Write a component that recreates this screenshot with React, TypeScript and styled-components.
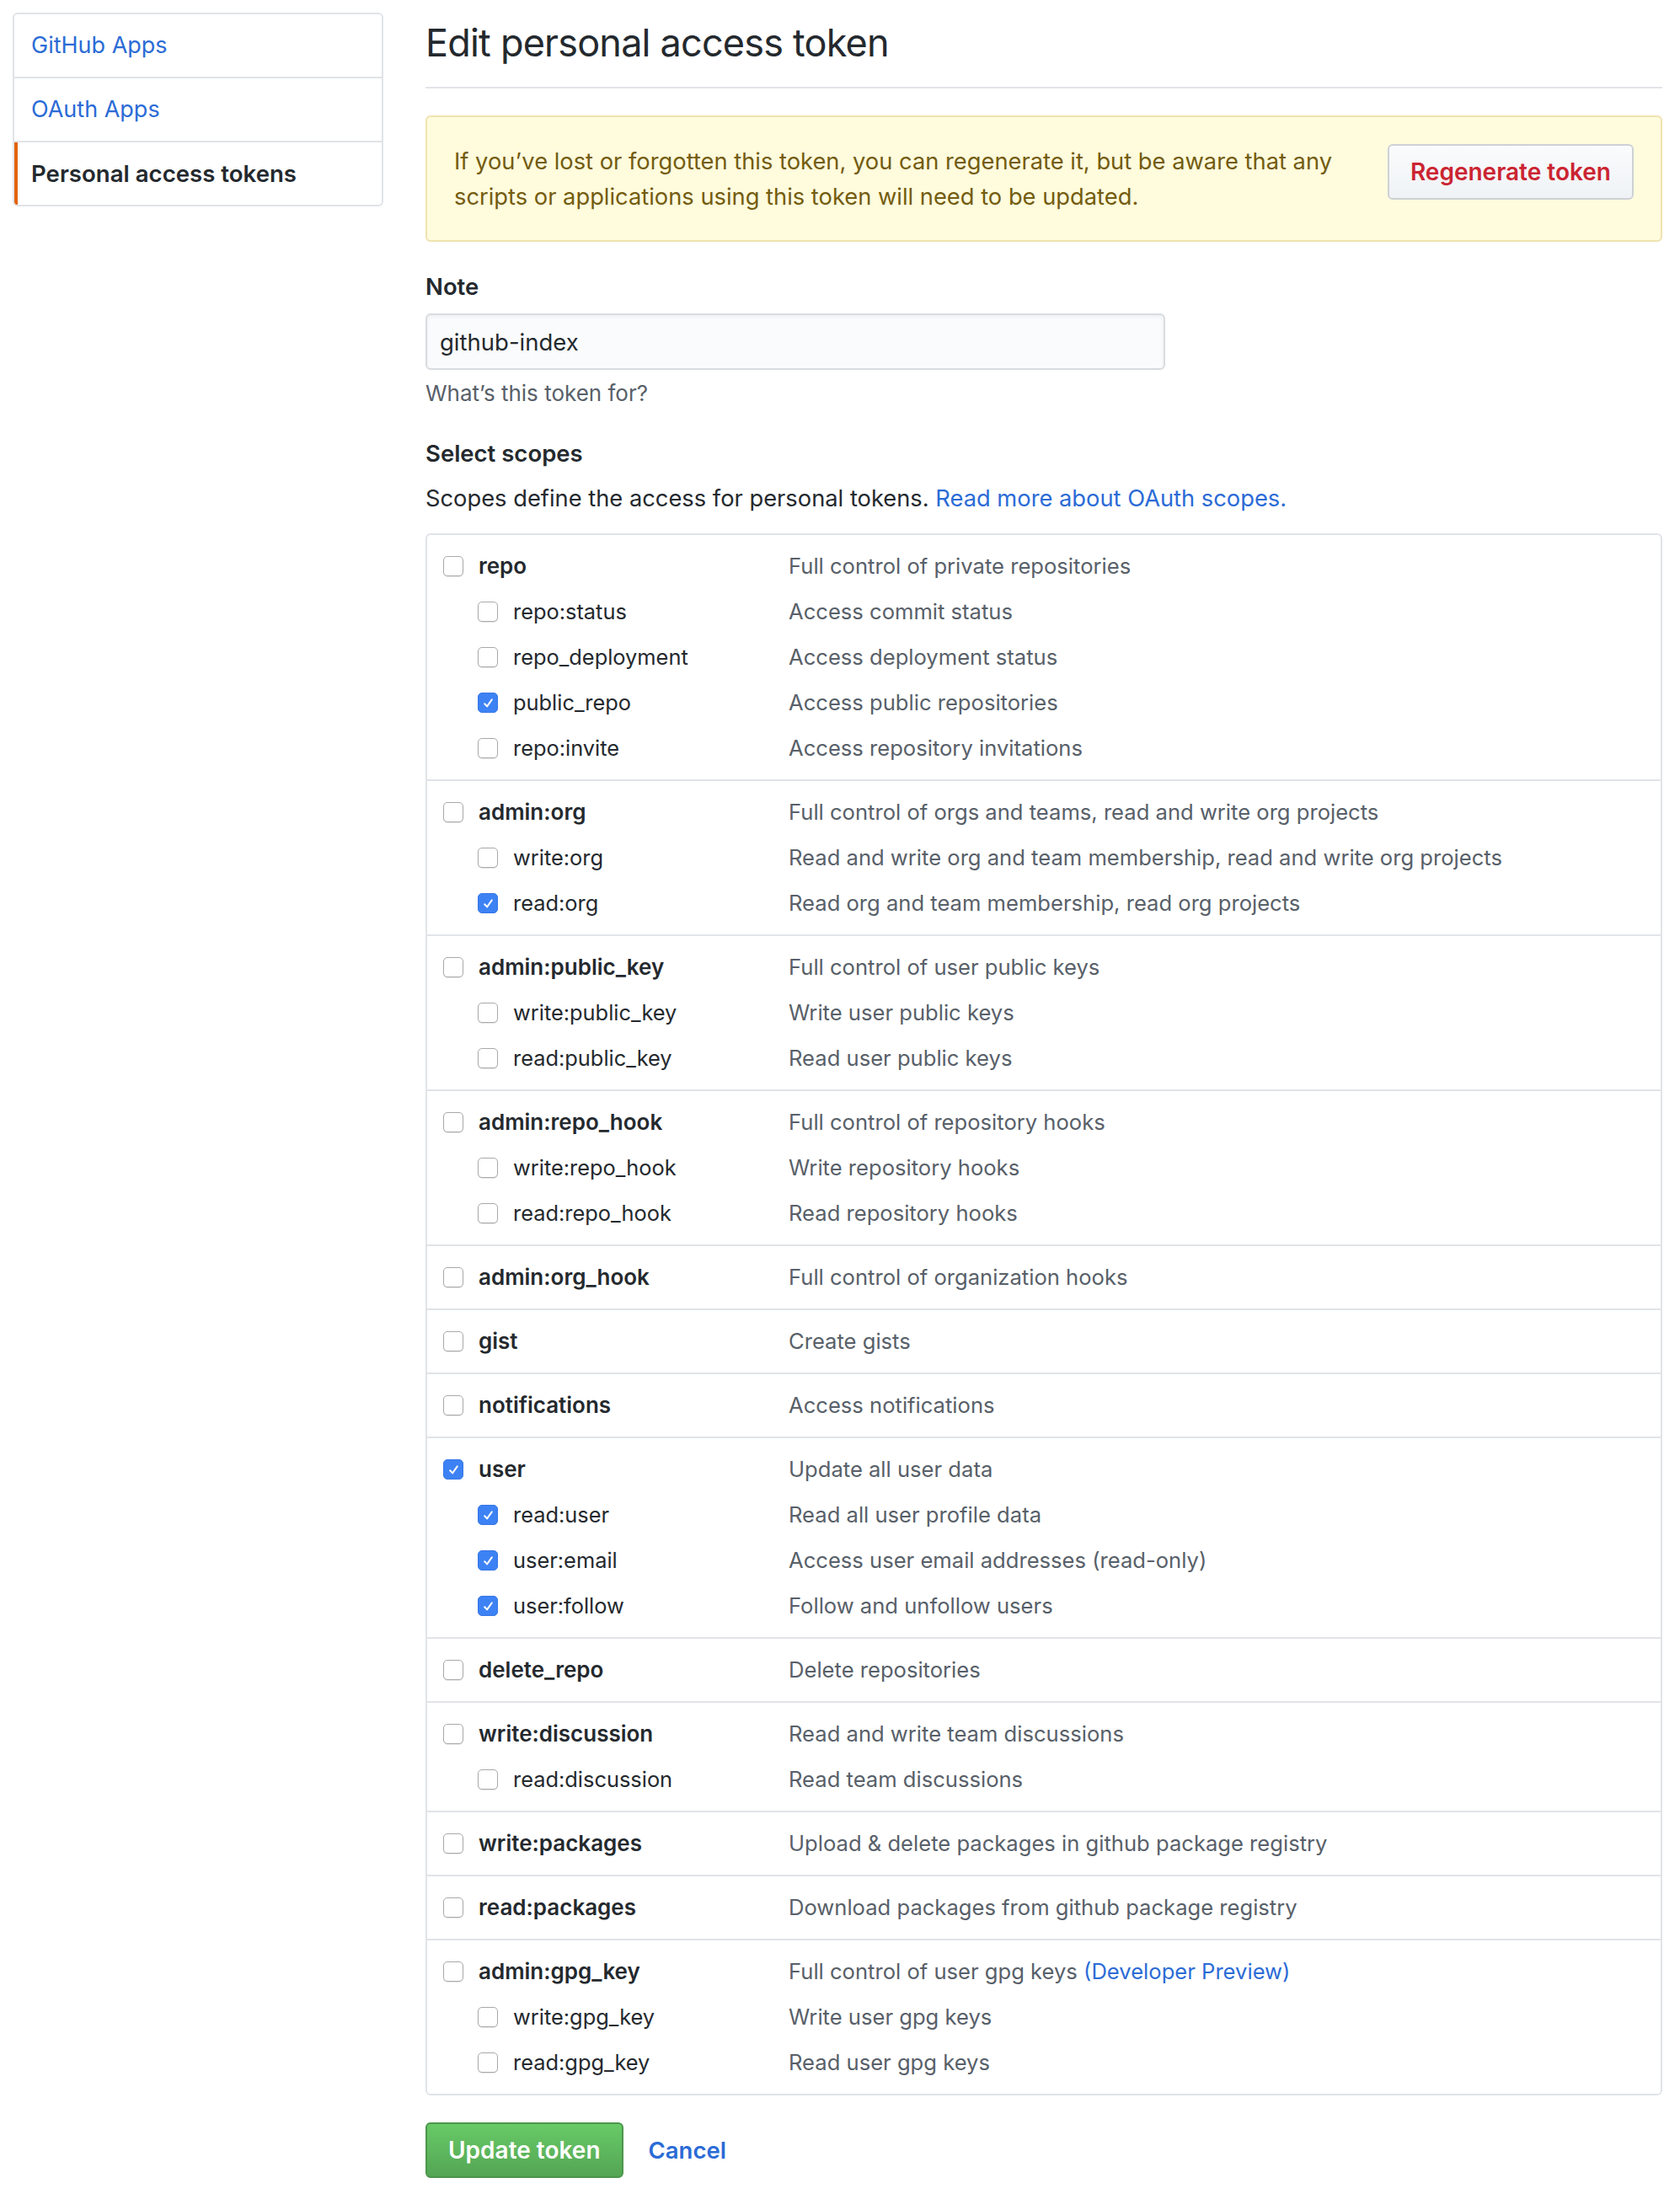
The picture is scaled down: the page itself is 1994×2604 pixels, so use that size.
import React from "react";
import styled, { createGlobalStyle, css } from "styled-components";

const GlobalStyle = createGlobalStyle`
  html, body {
    margin: 0;
    padding: 0;
    background: #ffffff;
  }
  body {
    font-family: Inter, "Noto Sans", "Liberation Sans", sans-serif;
    color: #24292e;
    font-size: 26px;
    line-height: 42px;
  }
  * {
    box-sizing: border-box;
  }
`;

const LINK = "#2b6bd6";
const BORDER = "#e1e4e8";

const Page = styled.div`
  display: flex;
  align-items: flex-start;
  gap: 50px;
  width: 1994px;
  padding: 15px 21px 20px 15px;
`;

const SideNav = styled.nav`
  width: 440px;
  flex: none;
  border: 2px solid ${BORDER};
  border-radius: 6px;
  overflow: hidden;
`;

const MenuItem = styled.a<{ $active?: boolean }>`
  display: block;
  padding: 16px 20px;
  font-size: 27px;
  line-height: 42px;
  color: ${LINK};
  text-decoration: none;
  & + & {
    border-top: 2px solid ${BORDER};
  }
  ${(p) =>
    p.$active &&
    css`
      color: #24292e;
      font-weight: 600;
      font-size: 27.6px;
      box-shadow: inset 4px 0 0 #e36209;
    `}
`;

const Main = styled.main`
  flex: 1;
  min-width: 0;
`;

const Subhead = styled.h2`
  margin: 0 0 32px;
  padding-bottom: 16px;
  border-bottom: 2px solid ${BORDER};
  font-size: 45px;
  letter-spacing: -0.8px;
  line-height: 72px;
  font-weight: 400;
  color: #24292e;
`;

const Flash = styled.div`
  display: flex;
  align-items: flex-start;
  gap: 40px;
  padding: 32px 32px 30px;
  background: #fffbdd;
  border: 2px solid rgba(176, 136, 0, 0.2);
  border-radius: 6px;
  color: #735c0f;
`;

const FlashText = styled.p`
  margin: 0;
  flex: 1;
  font-size: 27.3px;
  line-height: 42px;
`;

const Button = styled.button<{ $variant?: "danger" | "primary" }>`
  flex: none;
  height: 66px;
  padding: 0 25px;
  border-radius: 6px;
  font-family: inherit;
  font-size: 28px;
  font-weight: 600;
  line-height: 42px;
  cursor: pointer;
  ${(p) =>
    p.$variant === "primary"
      ? css`
          color: #ffffff;
          background: linear-gradient(180deg, #68ca67 0%, #54a554 100%);
          border: 2px solid #4c964c;
        `
      : css`
          color: #cb2431;
          background: linear-gradient(180deg, #fafbfc 0%, #eff3f6 100%);
          border: 2px solid #cdd1d6;
        `}
`;

const FormGroup = styled.div<{ $top?: number }>`
  margin-top: ${(p) => p.$top ?? 32}px;
`;

const Label = styled.label<{ $gap?: number }>`
  display: block;
  font-size: 27.5px;
  line-height: 42px;
  font-weight: 600;
  margin-bottom: ${(p) => p.$gap ?? 11}px;
`;

const TextInput = styled.input`
  display: block;
  width: 878px;
  height: 67px;
  padding: 0 15px;
  font-family: inherit;
  font-size: 27.5px;
  color: #24292e;
  background: #fafbfc;
  border: 2px solid #d9dce0;
  border-radius: 6px;
  box-shadow: inset 0 2px 4px rgba(27, 31, 35, 0.06);
  outline: none;
`;

const Note = styled.p`
  margin: 8px 0 0;
  font-size: 26px;
  line-height: 39px;
  color: #586069;
`;

const Lead = styled.p`
  margin: 0;
  font-size: 27.3px;
  line-height: 42px;
`;

const Link = styled.a`
  color: ${LINK};
  text-decoration: none;
`;

const ScopeList = styled.ul`
  list-style: none;
  margin: 20px 0 0;
  padding: 0;
  border: 2px solid ${BORDER};
  border-radius: 6px;
`;

const ScopeGroup = styled.li`
  padding: 10px 0;
  & + & {
    border-top: 2px solid ${BORDER};
  }
`;

const ScopeRow = styled.div`
  display: grid;
  grid-template-columns: 429px 1fr;
  align-items: center;
  height: 54px;
`;

const ScopeName = styled.span<{ $child?: boolean }>`
  display: flex;
  align-items: center;
  gap: 18px;
  padding-left: ${(p) => (p.$child ? 60 : 19)}px;
  font-size: ${(p) => (p.$child ? 25.4 : 26)}px;
  line-height: 42px;
  font-weight: ${(p) => (p.$child ? 400 : 600)};
  color: #24292e;
`;

const ScopeDesc = styled.span`
  font-size: 25.6px;
  line-height: 42px;
  color: #586069;
`;

const Box = styled.span<{ $checked?: boolean }>`
  flex: none;
  display: inline-flex;
  align-items: center;
  justify-content: center;
  width: 24px;
  height: 24px;
  border-radius: 5px;
  ${(p) =>
    p.$checked
      ? css`
          background: #3d82f4;
          border: 1px solid #3777e6;
        `
      : css`
          background: #ffffff;
          border: 1.5px solid #a9a9a9;
          box-shadow: 0 1px 1px rgba(0, 0, 0, 0.1);
        `}
`;

const Actions = styled.div`
  display: flex;
  align-items: center;
  gap: 30px;
  margin-top: 32px;
`;

const CancelLink = styled(Link)`
  font-weight: 600;
  font-size: 27.5px;
`;

const Checkbox: React.FC<{ checked?: boolean }> = ({ checked }) => (
  <Box $checked={checked}>
    {checked && (
      <svg width="15" height="15" viewBox="0 0 16 16" fill="none">
        <path d="M3.4 8.8 L6.5 12.2 L12.6 3.6" stroke="#ffffff" strokeWidth="2.1" strokeLinecap="round" strokeLinejoin="round" />
      </svg>
    )}
  </Box>
);

type Scope = { name: string; desc: React.ReactNode; checked?: boolean };
type Group = { parent: Scope; children?: Scope[] };

const groups: Group[] = [
  {
    parent: { name: "repo", desc: "Full control of private repositories" },
    children: [
      { name: "repo:status", desc: "Access commit status" },
      { name: "repo_deployment", desc: "Access deployment status" },
      { name: "public_repo", desc: "Access public repositories", checked: true },
      { name: "repo:invite", desc: "Access repository invitations" },
    ],
  },
  {
    parent: { name: "admin:org", desc: "Full control of orgs and teams, read and write org projects" },
    children: [
      { name: "write:org", desc: "Read and write org and team membership, read and write org projects" },
      { name: "read:org", desc: "Read org and team membership, read org projects", checked: true },
    ],
  },
  {
    parent: { name: "admin:public_key", desc: "Full control of user public keys" },
    children: [
      { name: "write:public_key", desc: "Write user public keys" },
      { name: "read:public_key", desc: "Read user public keys" },
    ],
  },
  {
    parent: { name: "admin:repo_hook", desc: "Full control of repository hooks" },
    children: [
      { name: "write:repo_hook", desc: "Write repository hooks" },
      { name: "read:repo_hook", desc: "Read repository hooks" },
    ],
  },
  { parent: { name: "admin:org_hook", desc: "Full control of organization hooks" } },
  { parent: { name: "gist", desc: "Create gists" } },
  { parent: { name: "notifications", desc: "Access notifications" } },
  {
    parent: { name: "user", desc: "Update all user data", checked: true },
    children: [
      { name: "read:user", desc: "Read all user profile data", checked: true },
      { name: "user:email", desc: "Access user email addresses (read-only)", checked: true },
      { name: "user:follow", desc: "Follow and unfollow users", checked: true },
    ],
  },
  { parent: { name: "delete_repo", desc: "Delete repositories" } },
  {
    parent: { name: "write:discussion", desc: "Read and write team discussions" },
    children: [{ name: "read:discussion", desc: "Read team discussions" }],
  },
  { parent: { name: "write:packages", desc: "Upload & delete packages in github package registry" } },
  { parent: { name: "read:packages", desc: "Download packages from github package registry" } },
  {
    parent: {
      name: "admin:gpg_key",
      desc: (
        <>
          Full control of user gpg keys <Link href="#">(Developer Preview)</Link>
        </>
      ),
    },
    children: [
      { name: "write:gpg_key", desc: "Write user gpg keys" },
      { name: "read:gpg_key", desc: "Read user gpg keys" },
    ],
  },
];

const Row: React.FC<{ scope: Scope; child?: boolean }> = ({ scope, child }) => (
  <ScopeRow>
    <ScopeName $child={child}>
      <Checkbox checked={scope.checked} />
      {scope.name}
    </ScopeName>
    <ScopeDesc>{scope.desc}</ScopeDesc>
  </ScopeRow>
);

export default function App() {
  return (
    <>
      <GlobalStyle />
      <Page>
        <SideNav>
          <MenuItem href="#">GitHub Apps</MenuItem>
          <MenuItem href="#">OAuth Apps</MenuItem>
          <MenuItem href="#" $active>
            Personal access tokens
          </MenuItem>
        </SideNav>

        <Main>
          <Subhead>Edit personal access token</Subhead>

          <Flash>
            <FlashText>
              If you’ve lost or forgotten this token, you can regenerate it, but be aware that any scripts or
              applications using this token will need to be updated.
            </FlashText>
            <Button>Regenerate token</Button>
          </Flash>

          <FormGroup>
            <Label htmlFor="note">Note</Label>
            <TextInput id="note" defaultValue="github-index" />
            <Note>What’s this token for?</Note>
          </FormGroup>

          <FormGroup $top={31}>
            <Label as="div" $gap={12}>
              Select scopes
            </Label>
            <Lead>
              Scopes define the access for personal tokens. <Link href="#">Read more about OAuth scopes.</Link>
            </Lead>
            <ScopeList>
              {groups.map((g) => (
                <ScopeGroup key={g.parent.name}>
                  <Row scope={g.parent} />
                  {g.children?.map((c) => (
                    <Row key={c.name} scope={c} child />
                  ))}
                </ScopeGroup>
              ))}
            </ScopeList>
          </FormGroup>

          <Actions>
            <Button $variant="primary">Update token</Button>
            <CancelLink href="#">Cancel</CancelLink>
          </Actions>
        </Main>
      </Page>
    </>
  );
}
